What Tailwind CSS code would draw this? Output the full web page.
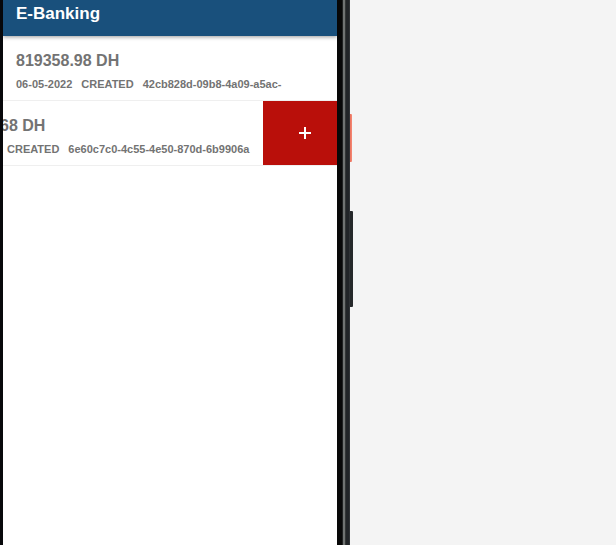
<!DOCTYPE html>
<html lang="en">
<head>
<meta charset="utf-8">
<meta name="viewport" content="width=device-width, initial-scale=1">
<title>E-Banking</title>
<script src="https://cdn.jsdelivr.net/npm/@tailwindcss/browser@4"></script>
</head>
<body class="bg-[#f4f4f4] font-['Liberation_Sans',Arial,sans-serif] font-bold text-[#737373]">
<div class="grid min-h-screen grid-cols-[350fr_266fr]">
  <div class="relative flex min-w-0 border-l-3 border-[#07080b]">
    <main class="min-w-0 flex-1 bg-white">
      <header class="relative flex bg-[#19507c] px-[13px] pt-[2px] pb-[10px] shadow-[0_1px_4px_rgba(0,0,0,0.4)]">
        <h1 class="text-[17px] leading-6 text-white">E-Banking</h1>
      </header>
      <ul>
        <li class="border-b border-[#efefef] px-[13px] pt-[13px] pb-2 whitespace-nowrap">
          <p class="text-base leading-6">819358.98 DH</p>
          <p class="mt-[3px] flex gap-[9px] text-[11px] leading-4"><span>06-05-2022</span><span>CREATED</span><span>42cb828d-09b8-4a09-a5ac-</span></p>
        </li>
        <li class="flex border-b border-[#efefef] whitespace-nowrap">
          <div class="min-w-0 flex-1 overflow-hidden pt-[13px] pb-2">
            <p class="-ml-[3px] text-base leading-6">68 DH</p>
            <p class="mt-[3px] flex gap-[9px] pl-1 text-[11px] leading-4"><span>CREATED</span><span>6e60c7c0-4c55-4e50-870d-6b9906a</span></p>
          </div>
          <button type="button" aria-label="Add" class="flex w-[74px] items-center justify-center bg-[#b90f0a] pl-[10px] text-white">
            <svg class="h-3 w-3" viewBox="0 0 12 12" fill="none" stroke="currentColor" stroke-width="2" aria-hidden="true"><path d="M6 0v12M0 6h12"/></svg>
          </button>
        </li>
      </ul>
    </main>
    <div class="flex w-[13px] shrink-0" aria-hidden="true">
      <div class="w-[5px] bg-[#080808]"></div>
      <div class="w-px bg-[#202222]"></div>
      <div class="w-[2px] bg-[#707372]"></div>
      <div class="w-px bg-[#343737]"></div>
      <div class="w-[3px] bg-[#222528]"></div>
      <div class="w-px bg-[#303336]"></div>
    </div>
    <div class="absolute top-[114px] left-full h-12 w-[2px] rounded-r-[1px] bg-linear-to-r from-[#e8705c] to-[#f58a76]" aria-hidden="true"></div>
    <div class="absolute top-[211px] left-full h-24 w-[3px] rounded-r-[1px] bg-[#25282a]" aria-hidden="true"></div>
  </div>
</div>
</body>
</html>
